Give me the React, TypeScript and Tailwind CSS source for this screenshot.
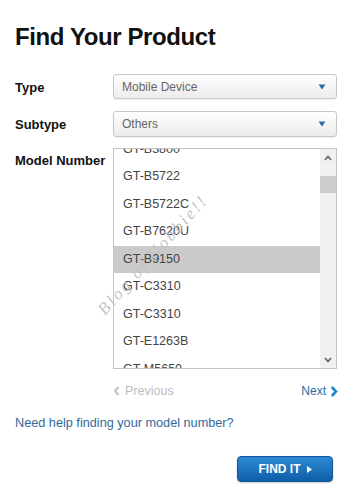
import React from "react";

const items = [
  "GT-B3800",
  "GT-B5722",
  "GT-B5722C",
  "GT-B7620U",
  "GT-B9150",
  "GT-C3310",
  "GT-C3310",
  "GT-E1263B",
  "GT-M5650",
];

function Caret() {
  return (
    <svg width="8" height="6" viewBox="0 0 8 6">
      <path d="M0.5 0.5 L7.5 0.5 L4 5.5 Z" fill="#2a6fa8" />
    </svg>
  );
}

function Select({ value }: { value: string }) {
  return (
    <div className="w-[224px] h-full rounded-[3px] border border-[#c8c8c8] bg-gradient-to-b from-white to-[#ececec] shadow-[0_1px_1px_rgba(0,0,0,0.06)] flex items-center justify-between pl-[8px] pr-[10px]">
      <span className="text-[12px] text-[#666]">{value}</span>
      <Caret />
    </div>
  );
}

export default function App() {
  return (
    <div className="relative w-[341px] h-[489px] overflow-hidden bg-white pl-[15px] pt-[23px] font-['Liberation_Sans',Arial,sans-serif] text-[#111]">
      <h1 className="text-[24px] leading-[28px] font-bold tracking-[-0.4px] text-[#111]">
        Find Your Product
      </h1>

      <div className="mt-[23px] flex h-[25px] items-center">
        <div className="w-[98px] pt-[3px] text-[13px] font-bold leading-[16px]">Type</div>
        <Select value="Mobile Device" />
      </div>

      <div className="mt-[12px] flex h-[26px] items-center">
        <div className="w-[98px] pt-[2px] text-[13px] font-bold leading-[16px]">Subtype</div>
        <Select value="Others" />
      </div>

      <div className="mt-[11px] flex">
        <div className="w-[98px] pt-[5px] text-[13px] font-bold leading-[16px]">Model Number</div>
        <div className="relative flex h-[221px] w-[224px] border border-[#c4c4c4] bg-white">
          <div className="flex-1 overflow-hidden">
            <div className="-mt-[13.5px]">
              {items.map((it, i) => (
                <div
                  key={i}
                  className={
                    "flex h-[27.5px] items-center pl-[9px] text-[12.5px] text-[#444] " +
                    (it === "GT-B9150" ? "bg-[#cacaca]" : "")
                  }
                >
                  {it}
                </div>
              ))}
            </div>
          </div>
          <div className="flex w-[16px] flex-col bg-[#f0f0f0]">
            <div className="flex h-[17px] items-center justify-center">
              <svg width="8" height="6" viewBox="0 0 8 6">
                <path d="M1 5 L4 1.5 L7 5" stroke="#606060" strokeWidth="1.6" fill="none" />
              </svg>
            </div>
            <div className="mt-[10px] h-[17px] bg-[#cdcdcd]" />
            <div className="flex-1" />
            <div className="flex h-[17px] items-center justify-center">
              <svg width="8" height="6" viewBox="0 0 8 6">
                <path d="M1 1 L4 4.5 L7 1" stroke="#606060" strokeWidth="1.6" fill="none" />
              </svg>
            </div>
          </div>
        </div>
      </div>

      <div className="ml-[98px] mt-[14px] flex w-[225px] items-center justify-between leading-[16px]">
        <div className="flex items-center gap-[5px] text-[12.5px] text-[#bdbdbd]">
          <svg width="7" height="10" viewBox="0 0 7 10">
            <path d="M5.5 1 L2 5 L5.5 9" stroke="#c4c4c4" strokeWidth="2.2" fill="none" />
          </svg>
          <span>Previous</span>
        </div>
        <div className="flex items-center gap-[4px] text-[12px] text-[#2b6ca3]">
          <span>Next</span>
          <svg width="8" height="11" viewBox="0 0 8 11">
            <path d="M1.8 1 L6 5.5 L1.8 10" stroke="#1d8ad0" strokeWidth="2.6" fill="none" />
          </svg>
        </div>
      </div>

      <div className="mt-[16px] text-[12.7px] leading-[16px] text-[#33699a]">
        Need help finding your model number?
      </div>

      <div className="mt-[25px] flex justify-end pr-[8px]">
        <div className="flex h-[26px] w-[96px] items-center justify-center gap-[6px] rounded-[4px] border border-[#0d5597] bg-gradient-to-b from-[#2d8ad4] to-[#0e5ea8] shadow-[0_1px_2px_rgba(0,0,0,0.2)]">
          <span className="text-[12px] font-bold text-white">FIND IT</span>
          <svg width="5" height="7" viewBox="0 0 5 7">
            <path d="M0 0 L5 3.5 L0 7 Z" fill="white" />
          </svg>
        </div>
      </div>

      <div className="pointer-events-none absolute left-[68px] top-[242px] w-[170px] -rotate-[48deg] text-center font-['Liberation_Serif',serif] text-[17px] italic tracking-[2.5px] text-[#c4c4c4]">
        Blog of Hobbie!!
      </div>
    </div>
  );
}
